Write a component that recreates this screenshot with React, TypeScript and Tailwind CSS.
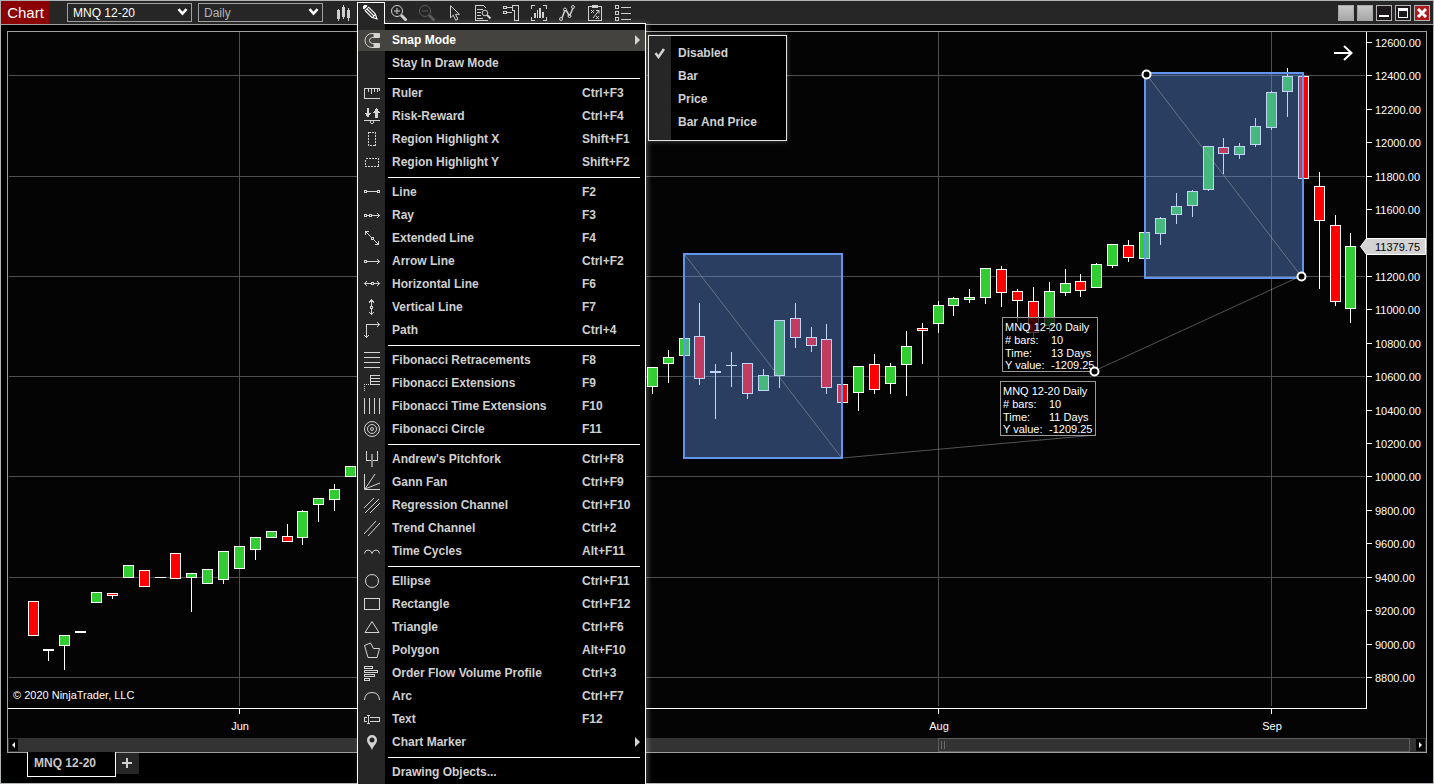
import React from "react";
import clsx from "clsx";

interface MenuItem {
  label: string;
  keys?: string;
  icon?: React.ReactNode;
  submenu?: boolean;
}

type Tone = "up" | "down" | "flat";
// x, high, body top, body bottom, low
type Candle = [number, number, number, number, number, Tone];

const CANDLES: Candle[] = [
  [33, 601, 601, 636, 636, "down"],
  [48, 649, 649, 651, 661, "flat"],
  [64, 635, 635, 646, 670, "up"],
  [80, 631, 631, 633, 633, "flat"],
  [96, 592, 592, 603, 603, "up"],
  [112, 593, 593, 596, 599, "down"],
  [128, 565, 565, 578, 578, "up"],
  [144, 570, 570, 587, 587, "down"],
  [160, 577, 577, 578, 578, "flat"],
  [175, 553, 553, 579, 579, "down"],
  [191, 573, 573, 578, 612, "up"],
  [207, 569, 569, 584, 584, "up"],
  [223, 551, 551, 580, 584, "up"],
  [239, 546, 546, 569, 569, "up"],
  [255, 537, 537, 550, 560, "up"],
  [271, 531, 531, 538, 538, "up"],
  [287, 524, 536, 542, 542, "down"],
  [302, 510, 511, 538, 545, "up"],
  [318, 498, 498, 505, 522, "up"],
  [334, 484, 489, 500, 511, "up"],
  [350, 466, 466, 477, 477, "up"],
  [652, 367, 367, 387, 394, "up"],
  [668, 350, 357, 364, 383, "up"],
  [684, 338, 338, 356, 356, "up"],
  [699, 303, 336, 379, 385, "down"],
  [715, 364, 371, 373, 419, "flat"],
  [731, 352, 365, 366, 387, "flat"],
  [747, 363, 363, 394, 399, "down"],
  [763, 369, 375, 391, 391, "up"],
  [779, 320, 320, 376, 388, "up"],
  [795, 303, 318, 338, 348, "down"],
  [811, 327, 337, 346, 352, "down"],
  [826, 324, 339, 388, 394, "down"],
  [842, 384, 384, 403, 403, "down"],
  [858, 366, 366, 393, 411, "up"],
  [874, 354, 364, 390, 394, "down"],
  [890, 363, 366, 384, 394, "up"],
  [906, 331, 346, 365, 396, "up"],
  [922, 323, 328, 331, 364, "down"],
  [938, 301, 305, 324, 333, "up"],
  [953, 297, 298, 306, 316, "up"],
  [969, 289, 297, 300, 303, "up"],
  [985, 268, 268, 298, 304, "up"],
  [1001, 266, 269, 293, 307, "down"],
  [1017, 289, 291, 301, 322, "down"],
  [1033, 287, 301, 333, 338, "down"],
  [1049, 282, 291, 326, 333, "up"],
  [1065, 269, 283, 293, 296, "up"],
  [1080, 274, 281, 291, 297, "down"],
  [1096, 263, 264, 288, 288, "up"],
  [1112, 244, 244, 266, 268, "up"],
  [1128, 240, 245, 258, 262, "down"],
  [1144, 232, 232, 259, 259, "up"],
  [1160, 217, 218, 234, 245, "up"],
  [1176, 193, 206, 215, 224, "up"],
  [1192, 190, 191, 206, 217, "up"],
  [1208, 146, 146, 190, 191, "up"],
  [1223, 138, 147, 154, 174, "down"],
  [1239, 143, 146, 155, 159, "up"],
  [1255, 118, 126, 145, 147, "up"],
  [1271, 91, 92, 128, 130, "up"],
  [1287, 68, 76, 92, 117, "up"],
  [1303, 76, 76, 179, 179, "down"],
  [1319, 172, 186, 221, 289, "down"],
  [1335, 215, 225, 302, 306, "down"],
  [1350, 233, 246, 309, 323, "up"],
];

const FILL: Record<Tone, string> = {
  up: "#32cd32",
  down: "#ff0000",
  flat: "#ffffff",
};

const GRID_Y = [75, 176, 276, 376, 476, 577, 677];
const MONTHS = [
  { x: 239, label: "Jun" },
  { x: 938, label: "Aug" },
  { x: 1271, label: "Sep" },
];
const PRICES = Array.from({ length: 20 }, (_, i) => 12600 - i * 200).filter(
  (price) => price !== 11400
);
const priceY = (price: number) => Math.round(42 + (12600 - price) * 0.1671);

const dot = (x: number, y: number) => (
  <rect x={x - 1} y={y - 1} width="2" height="2" />
);

const MENU: MenuItem[][] = [
  [
    {
      label: "Snap Mode",
      submenu: true,
      icon: (
        <g shapeRendering="auto">
          <path d="M15.500 1.500H8a7 7 0 0 0 0 14h7.500v-4H8.500a3 3 0 0 1 0-6h7z" />
          <path d="M10 2h5v3h-5zM10 12h5v3h-5z" fill="currentColor" />
        </g>
      ),
    },
    { label: "Stay In Draw Mode" },
  ],
  [
    {
      label: "Ruler",
      keys: "Ctrl+F3",
      icon: <path d="M16 13.500H.5v-10H16M15.500 3v3M4.500 3v4M7.500 3v6M10.500 3v4M13 3v4" />,
    },
    {
      label: "Risk-Reward",
      keys: "Ctrl+F4",
      icon: (
        <>
          <path
            d="M3 0h2v5h2l-3 5-3-5h2zM11 10h3V5h2l-3.500-5L9 5h2z"
            fill="currentColor"
            stroke="none"
          />
          <path d="M0 12.500h16M6 13l1 2h2l1-2" />
        </>
      ),
    },
    {
      label: "Region Highlight X",
      keys: "Shift+F1",
      icon: <path d="M4.500 1.500h7v13h-7z" strokeDasharray="2 1" />,
    },
    {
      label: "Region Highlight Y",
      keys: "Shift+F2",
      icon: <path d="M1.500 4.500h13v8h-13z" strokeDasharray="2 1" />,
    },
  ],
  [
    {
      label: "Line",
      keys: "F2",
      icon: (
        <>
          {dot(1.5, 7.5)}
          {dot(14.5, 7.5)}
          <path d="M3 7.500h10" />
        </>
      ),
    },
    {
      label: "Ray",
      keys: "F3",
      icon: (
        <>
          {dot(1.5, 8.5)}
          {dot(6.5, 8.5)}
          <path d="M3 8.500h2M8 8.500h8M13 6l2.500 2.500L13 11" />
        </>
      ),
    },
    {
      label: "Extended Line",
      keys: "F4",
      icon: (
        <>
          {dot(8.5, 8.5)}
          <path d="M1.500 1.500l6 6M9.500 9.500l5 5M1.500 5v-3.500H5M11 14.500h3.500V11" />
        </>
      ),
    },
    {
      label: "Arrow Line",
      keys: "Ctrl+F2",
      icon: (
        <>
          {dot(1.5, 8.5)}
          <path d="M3 8.500h13M13 6l2.500 2.500L13 11" />
        </>
      ),
    },
    {
      label: "Horizontal Line",
      keys: "F6",
      icon: (
        <>
          {dot(8.5, 7.5)}
          <path d="M0 7.500h7M10 7.500h6M3 5L.5 7.500 3 10M13 5l2.500 2.500L13 10" />
        </>
      ),
    },
    {
      label: "Vertical Line",
      keys: "F7",
      icon: (
        <>
          {dot(7.5, 8.5)}
          <path d="M7.500 1v6M7.500 10v6M5 3.500L7.500 1 10 3.500M5 13l2.500 2.500L10 13" />
        </>
      ),
    },
    {
      label: "Path",
      keys: "Ctrl+4",
      icon: <path d="M2.500 16V2.500H16M13 0l2.500 2.500L13 5M0 13l2.500 2.500L5 13" />,
    },
  ],
  [
    {
      label: "Fibonacci Retracements",
      keys: "F8",
      icon: <path d="M0 .5h16M0 5.500h16M0 10.500h16M0 15.500h16" />,
    },
    {
      label: "Fibonacci Extensions",
      keys: "F9",
      icon: (
        <>
          <path d="M16 .5H6.500v9H16M6 3.500h10M6 6.500h10" />
          <path d="M5 9.500H.5V16" strokeDasharray="1 1" />
        </>
      ),
    },
    {
      label: "Fibonacci Time Extensions",
      keys: "F10",
      icon: <path d="M.5 0v16M5.500 0v16M10.500 0v16M15.500 0v16" />,
    },
    {
      label: "Fibonacci Circle",
      keys: "F11",
      icon: (
        <g shapeRendering="auto">
          <circle cx="8" cy="8" r="7.500" />
          <circle cx="8" cy="8" r="4.500" />
          <circle cx="8" cy="8" r="1.500" />
        </g>
      ),
    },
  ],
  [
    {
      label: "Andrew's Pitchfork",
      keys: "Ctrl+F8",
      icon: (
        <>
          <path d="M2.500 0v9.500h11V0" />
          <path d="M8 3v13" stroke="#8a8a8a" strokeWidth="2" />
        </>
      ),
    },
    {
      label: "Gann Fan",
      keys: "Ctrl+F9",
      icon: (
        <path d="M.5 0v15.500H16M1 15L11 0M1 15l15-6" shapeRendering="auto" />
      ),
    },
    {
      label: "Regression Channel",
      keys: "Ctrl+F10",
      icon: (
        <path d="M0 11L10 1M1 16L15 2M6 16L16 6" shapeRendering="auto" />
      ),
    },
    {
      label: "Trend Channel",
      keys: "Ctrl+2",
      icon: <path d="M0 14L12 1M4 16L16 3" shapeRendering="auto" />,
    },
    {
      label: "Time Cycles",
      keys: "Alt+F11",
      icon: (
        <path
          d="M.5 10.500Q1 7 4 7t4 3.500Q9 7 12 7t3.500 3.500"
          shapeRendering="auto"
        />
      ),
    },
  ],
  [
    {
      label: "Ellipse",
      keys: "Ctrl+F11",
      icon: <circle cx="8" cy="8" r="6.500" shapeRendering="auto" />,
    },
    {
      label: "Rectangle",
      keys: "Ctrl+F12",
      icon: <path d="M.5 2.500h15v11H.5z" />,
    },
    {
      label: "Triangle",
      keys: "Ctrl+F6",
      icon: <path d="M8 2.500l7 11H1z" shapeRendering="auto" />,
    },
    {
      label: "Polygon",
      keys: "Alt+F10",
      icon: (
        <path
          d="M.5 3.500L6.500 1l3 5.500h6l-2.500 9H4z"
          shapeRendering="auto"
        />
      ),
    },
    {
      label: "Order Flow Volume Profile",
      keys: "Ctrl+3",
      icon: (
        <path d="M.5 1.500h8v2h-8zM.5 5.500h13v2H.5zM.5 9.500h10v2H.5zM.5 13.500h5v2h-5z" />
      ),
    },
    {
      label: "Arc",
      keys: "Ctrl+F7",
      icon: (
        <path d="M.5 12Q1 4.500 8 4.500T15.500 12" shapeRendering="auto" />
      ),
    },
    {
      label: "Text",
      keys: "F12",
      icon: <path d="M3 6.500H.5v4H3M6 6.500h9.500v4H6M4.500 4v9M3 4.500h3M3 12.500h3" />,
    },
    {
      label: "Chart Marker",
      submenu: true,
      icon: (
        <path
          d="M8 1a5 5 0 0 0-5 5c0 3.500 3.500 5.500 5 10 1.500-4.500 5-6.500 5-10a5 5 0 0 0-5-5zm0 2.500a2.500 2.500 0 1 1 0 5 2.500 2.500 0 0 1 0-5z"
          fill="currentColor"
          fillRule="evenodd"
          stroke="none"
          shapeRendering="auto"
        />
      ),
    },
  ],
  [{ label: "Drawing Objects..." }],
];

const SNAP_MODES = ["Disabled", "Bar", "Price", "Bar And Price"];

const TOOLS: { name: string; dim?: boolean; icon: React.ReactNode }[] = [
  {
    name: "Zoom in",
    icon: (
      <g shapeRendering="auto">
        <circle cx="6" cy="6" r="5.500" />
        <path d="M3 6h6M6 3v6" />
        <path d="M10 10l5.500 5.500" strokeWidth="3" />
      </g>
    ),
  },
  {
    name: "Zoom out",
    dim: true,
    icon: (
      <g shapeRendering="auto">
        <circle cx="6" cy="6" r="5.500" />
        <path d="M3 6h6" />
        <path d="M10 10l5.500 5.500" strokeWidth="3" />
      </g>
    ),
  },
  {
    name: "Cursor",
    icon: (
      <path
        d="M3.500.8v12l2.800-2.600 2.400 5 2.200-1-2.400-4.900h4z"
        shapeRendering="auto"
      />
    ),
  },
  {
    name: "Data box",
    icon: (
      <>
        <path d="M12.500 15.500H.5V.5h8l3 3M2 4.500h6M2 7.500h4M2 10.500h4M2 13h6" />
        <g shapeRendering="auto">
          <circle cx="10" cy="8" r="2.800" />
          <path d="M12 10l3.500 3.500" strokeWidth="2" />
        </g>
      </>
    ),
  },
  {
    name: "Chart trader",
    icon: (
      <path d="M.5 1.500h3v2h-3zM.5 6.500h3v2h-3zM4 2.500h5M4 7.500h5M9.500.5h6v15h-4v-10h-2z" />
    ),
  },
  {
    name: "Indicators",
    icon: (
      <>
        <path d="M4 .5H.5V4M12 .5h3.500V4M.5 12v3.500H4M15.500 12v3.500H12" />
        <path
          d="M3 8h2v5H3zM6 5h1v8H6zM8 3h2v10H8zM11 7h2v6h-2z"
          fill="currentColor"
          stroke="none"
        />
      </>
    ),
  },
  {
    name: "Strategies",
    icon: (
      <g shapeRendering="auto">
        <path d="M3 13l3-8M7 5l3.500 6M11 10l3-7" strokeWidth="1.500" />
        <circle cx="2" cy="14" r="1.500" />
        <circle cx="6" cy="4.500" r="1.500" />
        <circle cx="10.500" cy="11" r="1.500" />
        <circle cx="14" cy="2" r="1.500" />
      </g>
    ),
  },
  {
    name: "Strategy playbook",
    icon: (
      <>
        <path d="M1.500 1.500h13v14h-13zM5.500.5h5v2h-5z" />
        <path
          d="M4 5l3 3M7 5L4 8M9 5.500h3v3M12 5.500L6 13M9 11l3 3M12 11l-3 3"
          shapeRendering="auto"
        />
      </>
    ),
  },
  {
    name: "Properties",
    icon: (
      <path d="M.5.5h3v3h-3zM.5 6.500h3v3h-3zM.5 12.500h3v3h-3zM6 2.500h10M6 8.500h10M6 14.500h10" />
    ),
  },
];

function Icon({
  height = 16,
  className,
  children,
}: {
  height?: number;
  className?: string;
  children: React.ReactNode;
}) {
  return (
    <svg
      width="16"
      height={height}
      viewBox={`0 0 16 ${height}`}
      className={clsx("shrink-0", className)}
      fill="none"
      stroke="currentColor"
      shapeRendering="crispEdges"
      aria-hidden="true"
    >
      {children}
    </svg>
  );
}

function ToolbarSelect({
  label,
  options,
  className,
}: {
  label: string;
  options: string[];
  className?: string;
}) {
  return (
    <label
      aria-label={label}
      className={clsx("relative h-[19px] w-[125px]", className)}
    >
      <select
        aria-label={label}
        className="block h-full w-full appearance-none border border-[#a0a0a0] bg-[#262626] pl-[5px] text-xs leading-4"
      >
        {options.map((option) => (
          <option key={option}>{option}</option>
        ))}
      </select>
      <svg
        className="pointer-events-none absolute top-[5px] right-1 text-white"
        width="11"
        height="8"
        viewBox="0 0 11 8"
        fill="none"
        stroke="currentColor"
        strokeWidth="2.500"
        aria-hidden="true"
      >
        <path d="M1.500 1.200l4 4.500 4-4.500" />
      </svg>
    </label>
  );
}

function SnapSubmenu() {
  return (
    <ul className="absolute top-[6px] left-[290px] w-[139px] border border-[#e4e4e4] bg-[linear-gradient(to_right,#262626_22px,#000_22px)] py-[6px] shadow-[0_0_5px_rgba(255,255,255,0.3)]">
      {SNAP_MODES.map((mode, i) => (
        <li key={mode}>
          <button className="flex h-[23px] w-full items-center text-left">
            <span className="flex w-[29px] pl-[5px]">
              {i === 0 ? (
                <svg width="12" height="12" viewBox="0 0 12 12" fill="none" aria-hidden="true">
                  <path d="M1.500 6l3 4L10 2" stroke="#d4d4d4" strokeWidth="2.500" />
                </svg>
              ) : null}
            </span>
            {mode}
          </button>
        </li>
      ))}
    </ul>
  );
}

function DrawingMenu() {
  return (
    <div className="absolute top-[21px] left-0 z-20 w-[289px] border border-b-0 border-white bg-[linear-gradient(to_right,#262626_27px,#000_27px)] pt-[5px] text-xs font-bold text-[#d0d0d0] shadow-[2px_0_5px_rgba(255,255,255,0.25)]">
      {MENU.map((group, g) => (
        <ul
          key={group[0].label}
          className={clsx(
            g > 0 &&
              "before:my-[3px] before:mr-[5px] before:ml-[30px] before:block before:h-px before:bg-white"
          )}
        >
          {group.map((item) => (
            <MenuRow
              key={item.label}
              item={item}
              active={item.label === "Snap Mode"}
            />
          ))}
        </ul>
      ))}
    </div>
  );
}

function MenuRow({ item, active }: { item: MenuItem; active: boolean }) {
  return (
    <li className="relative py-px">
      <button
        className={clsx(
          "grid h-[21px] w-full grid-cols-[34px_190px_1fr] items-center text-left whitespace-nowrap",
          active && "bg-[#45433f] text-white"
        )}
      >
        <span className="pl-[6px] text-[#d4d4d4]">
          {item.icon ? <Icon height={17}>{item.icon}</Icon> : null}
        </span>
        <span>{item.label}</span>
        {item.submenu ? (
          <svg
            className="mr-[5px] justify-self-end text-[#d4d4d4]"
            width="5"
            height="10"
            viewBox="0 0 5 10"
            aria-hidden="true"
          >
            <path d="M0 0l5 5-5 5z" fill="currentColor" />
          </svg>
        ) : (
          <span>{item.keys}</span>
        )}
      </button>
      {active ? <SnapSubmenu /> : null}
    </li>
  );
}

function Toolbar() {
  return (
    <header className="flex h-[24px] items-center border-b border-[#a0a0a0] bg-[#262626] pr-[3px]">
      <h1 className="mr-[17px] flex h-full w-[49px] items-center justify-center bg-[#8b0000] text-[15px] leading-none text-white">
        Chart
      </h1>
      <ToolbarSelect
        label="Instrument"
        options={["MNQ 12-20"]}
        className="mr-[6px] text-white"
      />
      <ToolbarSelect
        label="Interval"
        options={["Daily", "Weekly", "Monthly"]}
        className="mr-[6px] text-[#b4b4b4]"
      />
      <div className="flex items-center text-[#cfcfcf]">
        <button aria-label="Chart style" className="flex w-7 justify-center">
          <Icon>
            <path
              d="M2 5h3v9H2zM3 14h1v2H3zM3 4h1v1H3zM7 2h3v10H7zM8 0h1v2H8zM8 12h1v2H8zM12 5h3v8h-3zM13 3h1v2h-1zM13 13h1v3h-1z"
              fill="currentColor"
              stroke="none"
            />
          </Icon>
        </button>
        <div className="relative flex">
          <button
            aria-label="Drawing tools"
            className="relative z-30 flex h-[22px] w-7 items-center justify-center border border-b-0 border-white bg-[#262626] text-white"
          >
            <Icon>
              <g transform="rotate(45)" shapeRendering="auto" stroke="none">
                <path
                  d="M1 -2.500h3v5H1zM5 -3h10l6 3-6 3H5z"
                  fill="currentColor"
                />
                <path
                  d="M6 -1.800h9v1.200H6zM6 .6h9v1.200H6zM16 -1.300l2.500 1.300L16 1.300z"
                  fill="#262626"
                />
              </g>
            </Icon>
          </button>
          <DrawingMenu />
        </div>
        {TOOLS.map((tool) => (
          <button
            key={tool.name}
            aria-label={tool.name}
            disabled={tool.dim}
            className={clsx(
              "flex w-7 justify-center",
              tool.dim && "text-[#5a5a5a]"
            )}
          >
            <Icon>{tool.icon}</Icon>
          </button>
        ))}
      </div>
      <div className="ml-auto flex gap-[3px]">
        <button
          aria-label="Link instrument"
          className="size-4 border border-[#a8a8a8] bg-linear-to-b from-[#c8c8c8] to-[#a8a6a6]"
        />
        <button
          aria-label="Link interval"
          className="size-4 border border-[#a8a8a8] bg-linear-to-b from-[#c8c8c8] to-[#a8a6a6]"
        />
        <button
          aria-label="Minimize"
          className="size-4 border border-[#b4b4b4] bg-[#1c181c] text-white"
        >
          <svg width="14" height="14" viewBox="0 0 14 14" aria-hidden="true">
            <path d="M2 9h10v2H2z" fill="currentColor" />
          </svg>
        </button>
        <button
          aria-label="Maximize"
          className="size-4 border border-[#b4b4b4] bg-[#1c181c] text-white"
        >
          <svg width="14" height="14" viewBox="0 0 14 14" aria-hidden="true">
            <path d="M2 2h10v10H2zM3 5v6h8V5z" fill="currentColor" fillRule="evenodd" />
          </svg>
        </button>
        <button
          aria-label="Close"
          className="size-4 border border-[#b4b4b4] bg-[#ac1c1c] text-white"
        >
          <svg width="14" height="14" viewBox="0 0 14 14" aria-hidden="true">
            <path d="M3 3l8 8M11 3l-8 8" stroke="currentColor" strokeWidth="3" />
          </svg>
        </button>
      </div>
    </header>
  );
}

function InfoBox({ x, y, days }: { x: number; y: number; days: string }) {
  return (
    <g transform={`translate(${x} ${y})`} fill="#fff">
      <rect
        x="0.5"
        y="0.5"
        width="95"
        height="54"
        fill="#000"
        fillOpacity="0.75"
        stroke="#9a9a9a"
      />
      <text x="3" y="14">MNQ 12-20 Daily</text>
      <text x="3" y="27"># bars:</text>
      <text x="49" y="27">10</text>
      <text x="3" y="40">Time:</text>
      <text x="49" y="40">{days}</text>
      <text x="3" y="52">Y value:</text>
      <text x="49" y="52">-1209.25</text>
    </g>
  );
}

function Handle({ x, y }: { x: number; y: number }) {
  return (
    <circle cx={x} cy={y} r="4" fill="#000" stroke="#fff" strokeWidth="2" />
  );
}

function PriceChart() {
  return (
    <svg
      viewBox="8 32 1418 706"
      className="block w-full text-[11px]"
      role="img"
      aria-label="MNQ 12-20 daily candles"
    >
      <g fill="#4f4f4f" shapeRendering="crispEdges">
        {GRID_Y.map((y) => (
          <rect key={y} x="9" y={y} width="1356" height="1" />
        ))}
        {MONTHS.map(({ x }) => (
          <rect key={x} x={x} y="32" width="1" height="674" />
        ))}
      </g>

      <g fill="#fff" shapeRendering="crispEdges">
        <rect x="8" y="708" width="1359" height="1" />
        <rect x="1366" y="32" width="1" height="677" />
        {MONTHS.map(({ x }) => (
          <rect key={x} x={x} y="709" width="1" height="5" />
        ))}
        {PRICES.map((price) => (
          <rect key={price} x="1367" y={priceY(price)} width="5" height="1" />
        ))}
      </g>

      <g fill="#fff">
        {MONTHS.map(({ x, label }) => (
          <text key={label} x={x + 1} y="730" textAnchor="middle">
            {label}
          </text>
        ))}
        {PRICES.map((price) => (
          <text key={price} x="1375" y={priceY(price) + 5}>
            {price.toFixed(2)}
          </text>
        ))}
        <text x="13" y="699">© 2020 NinjaTrader, LLC</text>
      </g>

      <path
        d="M1360.500 246.500l6-8h59v16h-59z"
        fill="#d3d3d3"
        stroke="#fff"
      />
      <text x="1375" y="251" fill="#000">11379.75</text>

      <g shapeRendering="crispEdges">
        {CANDLES.map(([x, high, top, bottom, low, tone]) => (
          <g key={x}>
            <rect x={x} y={high} width="1" height={low - high} fill="#fff" />
            <rect x={x - 5} y={top} width="11" height={bottom - top} fill="#fff" />
            {tone !== "flat" ? (
              <rect
                x={x - 4}
                y={top + 1}
                width="9"
                height={bottom - top - 2}
                fill={FILL[tone]}
              />
            ) : null}
          </g>
        ))}
      </g>

      <g fill="#6495ed" fillOpacity="0.4" stroke="#6495ed" strokeWidth="2">
        <rect x="684" y="254" width="158" height="204" />
        <rect x="1145" y="73" width="158" height="205" />
      </g>

      <g stroke="#b4b4b4" strokeOpacity="0.45">
        <path d="M685 255L841 457M842 458L1096 435" />
        <path d="M1146 74L1301 276L1094 371" fill="none" />
      </g>

      <InfoBox x={1002} y={317} days="13 Days" />
      <InfoBox x={1000} y={381} days="11 Days" />
      <Handle x={1146.5} y={74.5} />
      <Handle x={1301.5} y={276.5} />
      <Handle x={1094.5} y={371.5} />

      <path
        d="M1334 53h17M1344 46l7.500 7-7.500 7"
        fill="none"
        stroke="#fff"
        strokeWidth="2"
      />
    </svg>
  );
}

function Scrollbar() {
  return (
    <div className="flex h-[14px] bg-[#333] px-px">
      <button
        aria-label="Scroll left"
        className="flex w-[9px] items-center justify-center border-y border-[#333] bg-black"
      >
        <svg width="3" height="6" viewBox="0 0 3 6" aria-hidden="true">
          <path d="M3 0v6L0 3z" fill="#fff" />
        </svg>
      </button>
      <div className="flex flex-1 justify-end">
        <div className="mr-[6px] flex w-[472px] gap-[2px] border border-[#5e5e5e] py-[2px] pl-[2px]">
          <span className="w-px bg-[#6a6a6a]" />
          <span className="w-px bg-[#6a6a6a]" />
        </div>
      </div>
      <button
        aria-label="Scroll right"
        className="flex w-[9px] items-center justify-center border-y border-[#333] bg-black"
      >
        <svg width="3" height="6" viewBox="0 0 3 6" aria-hidden="true">
          <path d="M0 0v6l3-3z" fill="#fff" />
        </svg>
      </button>
    </div>
  );
}

export default function App() {
  return (
    <div className="flex min-h-screen w-full flex-col border border-[#b0b4b4] bg-black font-['Liberation_Sans',Arial,sans-serif]">
      <Toolbar />
      <main className="px-[6px] pt-[6px]">
        <section className="border border-[#a0a0a0] bg-[#040404]">
          <PriceChart />
          <Scrollbar />
        </section>
        <nav className="flex pl-5">
          <button className="-mt-px flex h-[25px] w-[89px] items-center border border-t-0 border-white bg-black pb-[2px] pl-[6px] text-xs font-bold text-[#c8c8c8]">
            MNQ 12-20
          </button>
          <button
            aria-label="New tab"
            className="flex h-[21px] w-[23px] items-center justify-center bg-[#262626] pr-px pb-px"
          >
            <svg width="10" height="10" viewBox="0 0 10 10" aria-hidden="true">
              <path d="M4 0h2v4h4v2H6v4H4V6H0V4h4z" fill="#d0d0d0" />
            </svg>
          </button>
        </nav>
      </main>
    </div>
  );
}
